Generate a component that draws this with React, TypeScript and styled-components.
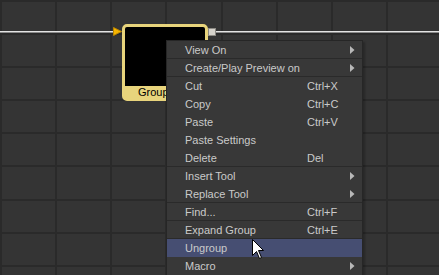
import React from "react";
import styled, {createGlobalStyle} from "styled-components";

const GlobalStyle = createGlobalStyle`
  html, body {
    margin: 0;
    padding: 0;
    background: #333333;
  }
  body {
    font-family: "Liberation Sans", Arial, sans-serif;
  }
`

const Canvas = styled.div`
  position: relative;
  width: 439px;
  height: 275px;
  overflow: hidden;
  background-color: #343434;
  background-image: repeating-linear-gradient(to right, #2a2a2a 0 2px, transparent 2px 55.14px),
  repeating-linear-gradient(to bottom, #2a2a2a 0 2px, transparent 2px 33.1px);
`

// the flow graph: wire -> group node -> wire, laid out as one row on the canvas
const FlowRow = styled.div`
  position: absolute;
  top: 24px;
  left: 0;
  right: 0;
  display: flex;
  align-items: flex-start;
`

const Wire = styled.div<{ $width?: number }>`
  ${p => p.$width ? `width: ${p.$width}px;` : 'flex: 1;'}
  margin-top: 7px;
  height: 1px;
  background: #e4e4e4;
  border-bottom: 1px solid #8a8a8a;
`

const InputArrow = styled.svg`
  margin-top: 3px;
  flex-shrink: 0;
`

const OutputPort = styled.div`
  margin-top: 4px;
  width: 6px;
  height: 6px;
  flex-shrink: 0;
  background: #d6d3cc;
  border: 1px solid #8c8a84;
`

const Node = styled.div`
  width: 86px;
  height: 77px;
  flex-shrink: 0;
  box-sizing: border-box;
  border: 3px solid #e8d47c;
  border-radius: 5px;
  background: #e8d47c;
  display: flex;
  flex-direction: column;
`

const Preview = styled.div`
  flex: 1;
  background: #000;
  border-radius: 2px 2px 0 0;
`

const NodeLabel = styled.div`
  height: 12px;
  padding-left: 13px;
  font-size: 11px;
  line-height: 13px;
  color: #000;
`

const Menu = styled.div`
  position: absolute;
  left: 166px;
  top: 40px;
  width: 197px;
  box-sizing: border-box;
  background: #383838;
  border: 1px solid #262626;
  box-shadow: 2px 2px 2px rgba(0, 0, 0, 0.25);
`

const Item = styled.div<{ $active?: boolean, $sep?: boolean }>`
  display: grid;
  grid-template-columns: 122px 1fr 12px;
  align-items: center;
  height: 18px;
  box-sizing: border-box;
  padding-left: 18px;
  font-size: 11px;
  color: #cacaca;
  background: ${p => p.$active ? '#464e72' : 'transparent'};
  border-bottom: 1px solid ${p => p.$sep ? '#2a2a2a' : 'transparent'};
  white-space: nowrap;
`

const Shortcut = styled.span`
  color: #cacaca;
`

const SubArrow = styled.svg`
  justify-self: start;
`

const Cursor = styled.svg`
  position: absolute;
  left: 252px;
  top: 239px;
`

type Entry = { label: string, shortcut?: string, sub?: boolean, sep?: boolean, active?: boolean }

const entries: Entry[] = [
    {label: 'View On', sub: true, sep: true},
    {label: 'Create/Play Preview on', sub: true, sep: true},
    {label: 'Cut', shortcut: 'Ctrl+X'},
    {label: 'Copy', shortcut: 'Ctrl+C'},
    {label: 'Paste', shortcut: 'Ctrl+V'},
    {label: 'Paste Settings'},
    {label: 'Delete', shortcut: 'Del', sep: true},
    {label: 'Insert Tool', sub: true},
    {label: 'Replace Tool', sub: true, sep: true},
    {label: 'Find...', shortcut: 'Ctrl+F', sep: true},
    {label: 'Expand Group', shortcut: 'Ctrl+E', sep: true},
    {label: 'Ungroup', active: true},
    {label: 'Macro', sub: true},
]

function App() {
    return (
        <>
            <GlobalStyle/>
            <Canvas>
                <FlowRow>
                    <Wire $width={113}/>
                    <InputArrow width="9" height="9" viewBox="0 0 9 9">
                        <path d="M0.5 0.5 L8.5 4.5 L0.5 8.5 Z" fill="#f4b400" stroke="#b98400" strokeWidth="1"/>
                    </InputArrow>
                    <Node>
                        <Preview/>
                        <NodeLabel>Group</NodeLabel>
                    </Node>
                    <OutputPort/>
                    <Wire/>
                </FlowRow>
                <Menu>
                    {entries.map(e =>
                        <Item key={e.label} $active={e.active} $sep={e.sep}>
                            <span>{e.label}</span>
                            <Shortcut>{e.shortcut}</Shortcut>
                            {e.sub ?
                                <SubArrow width="5" height="8" viewBox="0 0 5 8">
                                    <path d="M0 0 L4.5 4 L0 8 Z" fill="#b8b8b8"/>
                                </SubArrow> : <span/>}
                        </Item>
                    )}
                </Menu>
                <Cursor width="13" height="21" viewBox="0 0 13 21">
                    <path d="M0.5 0.5 L0.5 16.5 L4.5 12.5 L7.5 19.5 L9.5 18.5 L6.5 11.5 L11.5 11.5 Z"
                          fill="#fff" stroke="#000" strokeWidth="1" strokeLinejoin="miter"/>
                </Cursor>
            </Canvas>
        </>
    )
}

export default App;
